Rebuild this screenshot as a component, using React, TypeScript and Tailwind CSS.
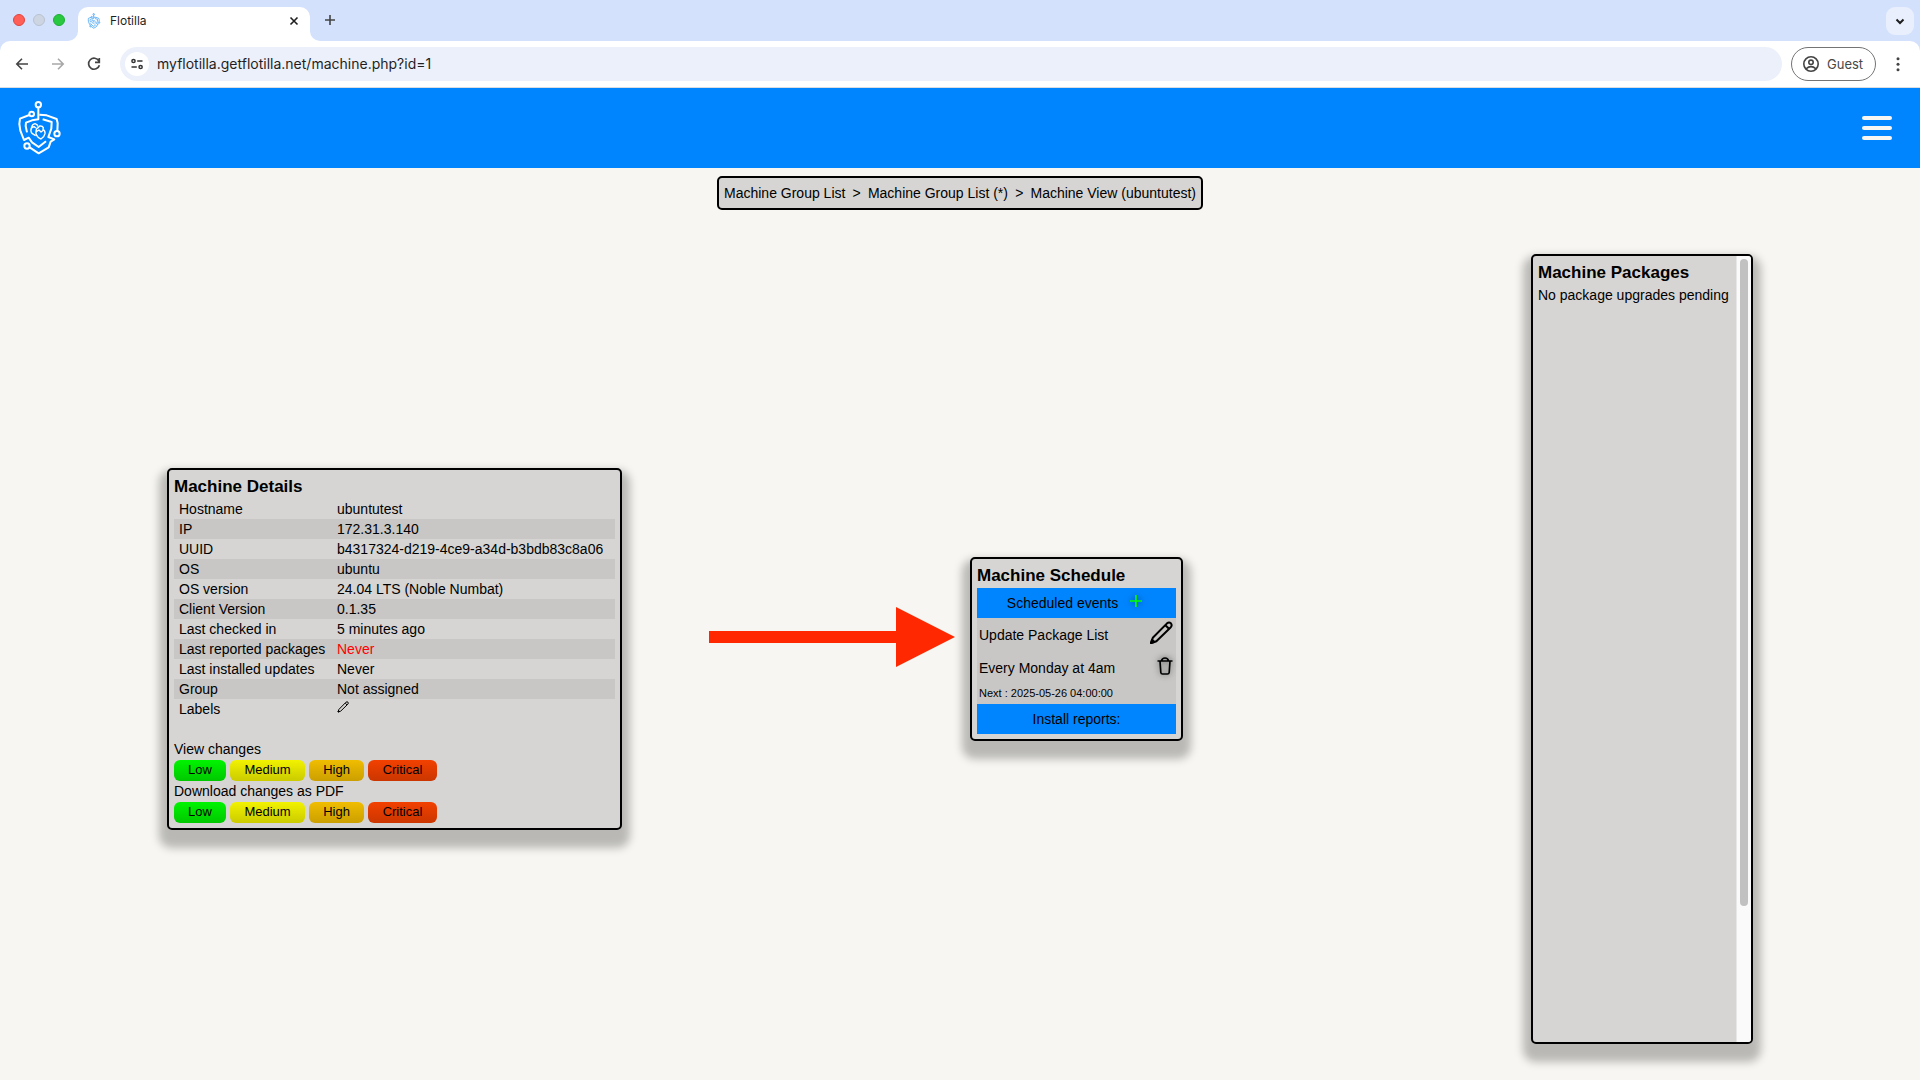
import React from "react";

function Logo({ className, stroke }: { className: string; stroke: number }) {
  return (
    <svg viewBox="50 300 141 168" className={className} fill="none" stroke="currentColor" strokeWidth={stroke} strokeLinejoin="round" aria-hidden="true">
      <circle cx="117" cy="314" r="8" />
      <circle cx="97" cy="342" r="7" />
      <circle cx="173" cy="401" r="8" />
      <circle cx="83" cy="438" r="8" />
      <path d="M117 322V358L98 361L80 368L79 378L83 397" />
      <path d="M90 345L62 356L60 372L63 392L74 420L88 413L98 427L118 441L140 424" />
      <path d="M120 344L142 346L172 357L175 370L174 393" />
      <path d="M130 358L157 366L156 386L147 411L165 418L154 425L148 442L118 460L91 442" />
      <g strokeWidth={stroke * 0.7}>
        <path d="M97 382Q92 392 98 400L109 407M97 382Q99 372 107 371Q115 373 116 380M97 384L104 380L110 384" />
        <path d="M110 395Q110 385 117 383L121 378Q129 377 132 383L131 388Q138 392 137 401Q135 411 125 417Q114 413 110 402ZM111 395L119 390L125 396L133 390" />
      </g>
    </svg>
  );
}

function Pencil({ className, stroke }: { className: string; stroke: number }) {
  return (
    <svg viewBox="0 0 24 24" className={className} fill="none" stroke="currentColor" strokeWidth={stroke} strokeLinejoin="round" aria-hidden="true">
      <path d="M2 22L3.8 16.8L18 2.4Q20 0.8 21.9 2.3Q23.4 4.2 21.8 6.2L7.4 20.3Z" />
      <path d="M16.4 4.2L20 7.8" />
      <path d="M2 22L3 18.8L5.4 21Z" fill="currentColor" />
    </svg>
  );
}

const card = "shrink-0 rounded-[5px] border-2 border-black bg-[#d6d5d3] shadow-[0_10px_8px_8px_rgba(0,0,0,0.25)]";
const heading = "h-6 text-[17px] leading-6 font-bold";

const details: [string, React.ReactNode][] = [
  ["Hostname", "ubuntutest"],
  ["IP", "172.31.3.140"],
  ["UUID", "b4317324-d219-4ce9-a34d-b3bdb83c8a06"],
  ["OS", "ubuntu"],
  ["OS version", "24.04 LTS (Noble Numbat)"],
  ["Client Version", "0.1.35"],
  ["Last checked in", "5 minutes ago"],
  ["Last reported packages", <span className="text-[#ff0000]">Never</span>],
  ["Last installed updates", "Never"],
  ["Group", "Not assigned"],
  [
    "Labels",
    <button aria-label="Edit labels" className="block pb-1">
      <Pencil className="size-3" stroke={2} />
    </button>,
  ],
];

const levels = [
  { name: "Low", style: "w-[52px] from-[#00f400] to-[#00c800]" },
  { name: "Medium", style: "w-[75px] from-[#f2f200] to-[#cbcb00]" },
  { name: "High", style: "w-[55px] from-[#f0bd00] to-[#cb9f00]" },
  { name: "Critical", style: "w-[69px] from-[#f24100] to-[#cb3600]" },
];

function Levels() {
  return (
    <div className="mt-px flex gap-1">
      {levels.map((l) => (
        <button key={l.name} className={"h-[21px] rounded-md bg-linear-to-b pb-0.5 text-[13px] leading-[19px] " + l.style}>
          {l.name}
        </button>
      ))}
    </div>
  );
}

function Chrome() {
  return (
    <div className="font-[Inter,sans-serif] text-[#1f1f1f]">
      <div className="flex h-[41px] items-start bg-[#d3e1fd] pt-[7px] pl-[13px] pr-[6px]">
        <div className="flex h-[26px] items-center gap-2">
          <span className="size-3 rounded-full border border-[#e0443e] bg-[#ff5f57]" />
          <span className="size-3 rounded-full border border-[#b9c2d0] bg-[#cdd5e2]" />
          <span className="size-3 rounded-full border border-[#1fad35] bg-[#28c840]" />
        </div>
        <div className="relative ml-[13px] flex h-[34px] w-[232px] items-center rounded-t-[10px] bg-white pr-[10px] pb-[6px] pl-[9px]">
          <svg viewBox="0 0 10 10" className="absolute bottom-0 -left-[10px] size-[10px]" aria-hidden="true"><path d="M10 0V10H0A10 10 0 0 0 10 0Z" fill="#fff" /></svg>
          <svg viewBox="0 0 10 10" className="absolute -right-[10px] bottom-0 size-[10px]" aria-hidden="true"><path d="M0 0V10H10A10 10 0 0 1 0 0Z" fill="#fff" /></svg>
          <Logo className="h-4 w-[14px] text-[#3f9ff5]" stroke={8} />
          <span className="ml-[9px] flex-1 text-xs">Flotilla</span>
          <button aria-label="Close tab">
            <svg viewBox="0 0 12 12" className="size-3" fill="none" stroke="currentColor" strokeWidth="1.6"><path d="M2.5 2.5L9.5 9.5M9.5 2.5L2.5 9.5" /></svg>
          </button>
        </div>
        <button aria-label="New tab" className="ml-[14px] mt-[7px]">
          <svg viewBox="0 0 12 12" className="size-3" fill="none" stroke="#444" strokeWidth="1.6"><path d="M6 1V11M1 6H11" /></svg>
        </button>
        <button aria-label="Search tabs" className="ml-auto flex size-7 items-center justify-center rounded-[9px] bg-[#e9effd]">
          <svg viewBox="0 0 12 12" className="size-3" fill="none" stroke="currentColor" strokeWidth="2"><path d="M2.5 4.5L6 8L9.5 4.5" /></svg>
        </button>
      </div>
      <div className="bg-[#d3e1fd]">
        <div className="flex h-[47px] items-center rounded-t-[10px] border-b border-[#dadde2] bg-white pr-[14px] pl-[14px]">
          <button aria-label="Back">
            <svg viewBox="0 0 16 16" className="size-4" fill="none" stroke="#444" strokeWidth="1.6"><path d="M14 8H3M8 2.8L2.8 8L8 13.2" /></svg>
          </button>
          <button aria-label="Forward" className="ml-5">
            <svg viewBox="0 0 16 16" className="size-4" fill="none" stroke="#a8a8a8" strokeWidth="1.6"><path d="M2 8H13M8 2.8L13.2 8L8 13.2" /></svg>
          </button>
          <button aria-label="Reload" className="ml-5">
            <svg viewBox="0 0 16 16" className="size-4" fill="none" stroke="#444" strokeWidth="1.7"><path d="M12.9 5A5.5 5.5 0 1 0 13.4 9.2M13.3 2V6.3H9" /></svg>
          </button>
          <div className="ml-[18px] flex h-[34px] flex-1 items-center gap-2 rounded-full bg-[#ecf0fa] px-[5px]">
            <button aria-label="Site information" className="flex size-6 items-center justify-center rounded-full bg-white">
              <svg viewBox="0 0 14 14" className="size-[14px]" fill="none" stroke="#333" strokeWidth="1.5"><circle cx="3.5" cy="4" r="1.6" /><path d="M7.2 4H12.5M1.5 10H6.8" /><circle cx="10.6" cy="10" r="1.6" /></svg>
            </button>
            <input
              aria-label="Address"
              readOnly
              value="myflotilla.getflotilla.net/machine.php?id=1"
              className="min-w-0 flex-1 bg-transparent text-sm leading-5 outline-none"
            />
          </div>
          <button className="ml-[9px] flex h-[34px] w-[85px] items-center gap-2 rounded-full border border-[#747474] pl-[11px] text-[13px] text-[#474747]">
            <svg viewBox="0 0 16 16" className="size-4" fill="none" stroke="#444" strokeWidth="1.6"><circle cx="8" cy="8" r="7.2" /><circle cx="8" cy="6.3" r="2.2" /><path d="M3 12.8Q8 8.6 13 12.8" /></svg>
            Guest
          </button>
          <button aria-label="Menu" className="ml-[14px]">
            <svg viewBox="0 0 16 16" className="size-4" fill="#444"><circle cx="8" cy="2.7" r="1.5" /><circle cx="8" cy="8.2" r="1.5" /><circle cx="8" cy="13.7" r="1.5" /></svg>
          </button>
        </div>
      </div>
    </div>
  );
}

export default function App() {
  return (
    <div className="flex min-h-screen flex-col bg-[#f7f6f2] font-['Liberation_Sans',Arial,sans-serif] text-sm leading-5 text-black">
      <Chrome />
      <header className="flex h-20 items-center justify-between bg-[#0085ff] pr-7 pl-4 text-white">
        <a href="#home" aria-label="Flotilla home">
          <Logo className="h-14 w-[47px]" stroke={6} />
        </a>
        <button aria-label="Open menu" className="flex flex-col gap-[6px]">
          <span className="h-1 w-[30px] rounded-full bg-[#f7f6f2]" />
          <span className="h-1 w-[30px] rounded-full bg-[#f7f6f2]" />
          <span className="h-1 w-[30px] rounded-full bg-[#f7f6f2]" />
        </button>
      </header>

      <nav aria-label="Breadcrumb" className="mt-2 flex h-[34px] min-w-[486px] items-center justify-between self-center rounded-[5px] border-2 border-black bg-[#d6d5d3] px-[5px]">
        <a href="#groups">Machine Group List</a>
        <span>&gt;</span>
        <a href="#group">Machine Group List (*)</a>
        <span>&gt;</span>
        <a href="#machine">Machine View (ubuntutest)</a>
      </nav>

      <main className="mt-2 flex flex-1 items-center justify-around gap-[14px]">
        <section className={card + " min-w-[455px] p-[5px]"}>
          <h2 className={heading}>Machine Details</h2>
          <table className="w-full border-collapse">
            <tbody>
              {details.map(([k, v]) => (
                <tr key={k} className="h-5 even:bg-[#c8c7c5]">
                  <th scope="row" className="w-[158px] p-0 pl-[5px] text-left font-normal">{k}</th>
                  <td className="p-0 pl-[5px]">{v}</td>
                </tr>
              ))}
            </tbody>
          </table>
          <h3 className="mt-5">View changes</h3>
          <Levels />
          <h3>Download changes as PDF</h3>
          <Levels />
        </section>

        <div className="relative shrink-0">
          <svg viewBox="0 0 246 60" className="absolute top-[50px] right-full mr-[15px] h-[60px] w-[246px]" fill="#ff2800" aria-hidden="true">
            <path d="M0 24H187V0L246 30L187 60V36H0Z" />
          </svg>
          <section className={card + " min-w-[213px] p-[5px]"}>
            <h2 className={heading}>Machine Schedule</h2>
            <div className="flex h-[30px] items-center justify-center gap-3 bg-[#0085ff] pr-1">
              <h3>Scheduled events</h3>
              <button aria-label="Add event" className="mb-1">
                <svg viewBox="0 0 12 12" className="size-3 drop-shadow-[0_0_3px_rgba(0,0,0,0.5)]" fill="none" stroke="#00ff00" strokeWidth="1.6"><path d="M6 0V12M0 6H12" /></svg>
              </button>
            </div>
            <div className="bg-[#c8c7c5] pr-[3px] pl-0.5">
              <div className="flex h-[33px] items-center justify-between">
                <span>Update Package List</span>
                <button aria-label="Edit event" className="mb-1"><Pencil className="size-6" stroke={2} /></button>
              </div>
              <div className="flex h-[33px] items-center justify-between">
                <span>Every Monday at 4am</span>
                <button aria-label="Delete event" className="mb-1">
                  <svg viewBox="0 0 16 18" className="h-[18px] w-4 drop-shadow-[0_0_3px_rgba(0,0,0,0.6)]" fill="none" stroke="currentColor" strokeWidth="1.7" strokeLinejoin="round"><path d="M0.5 4H15.5M4.5 4Q5 1 8 1Q11 1 11.5 4M3 4L3.8 15.5Q4 17 5.5 17H10.5Q12 17 12.2 15.5L13 4" /></svg>
                </button>
              </div>
              <p className="h-5 text-[11px] leading-[18px]">Next : 2025-05-26 04:00:00</p>
            </div>
            <h3 className="flex h-[30px] items-center justify-center bg-[#0085ff]">Install reports:</h3>
          </section>
        </div>

        <section className={card + " flex h-[790px] min-w-[222px] overflow-hidden"}>
          <div className="flex-1 p-[5px]">
            <h2 className={heading}>Machine Packages</h2>
            <p>No package upgrades pending</p>
          </div>
          <div className="w-[15px] border-l border-[#e7e7e7] bg-[#fafafa] px-[3px] py-[3px]">
            <div className="h-[83%] w-2 rounded-full bg-[#c1c1c1]" />
          </div>
        </section>
      </main>
    </div>
  );
}
